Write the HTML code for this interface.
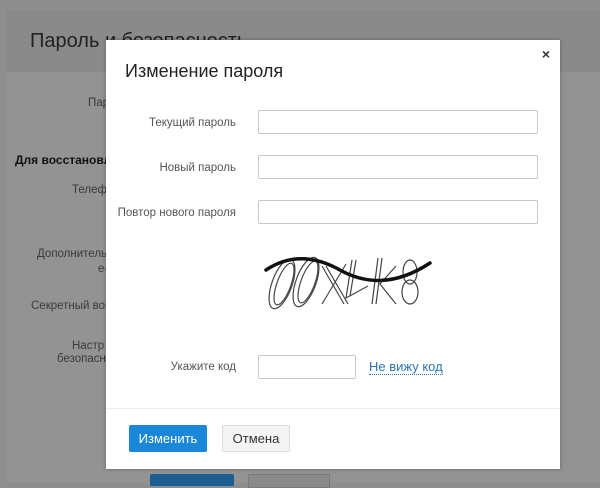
<!DOCTYPE html>
<html><head><meta charset="utf-8"><style>
body{margin:0;width:600px;height:483px;background:#8e8e8e;font-family:"Liberation Sans",sans-serif;position:relative;overflow:hidden}
.a{position:absolute}
.bgp{left:6px;top:10px;width:594px;height:473px;background:#939393}
.hdr{left:6px;top:10px;width:594px;height:62px;background:#8a8a8a}
.bl{color:#3a3a3a;font-size:11.5px;text-align:right}
.m{left:106px;top:40px;width:454px;height:429px;background:#fff;box-shadow:0 0 4px rgba(0,0,0,.3)}
.lab{position:absolute;right:324px;font-size:11.5px;color:#555;text-align:right;white-space:nowrap}
.inp{position:absolute;left:152px;width:278px;height:22px;border:1px solid #c8c8c8;border-radius:2px}
</style></head><body>
<div class="a bgp"></div><div class="a hdr"></div>
<div class="a" style="left:30px;top:30px;font-size:20px;color:#222">Пароль и безопасность</div>
<div class="a bl" style="left:88px;top:97px">Пар</div>
<div class="a" style="left:15px;top:153px;font-size:12px;font-weight:bold;color:#111">Для восстановления</div>
<div class="a bl" style="left:72px;top:184px">Телеф</div>
<div class="a bl" style="left:37px;top:248px">Дополнитель</div>
<div class="a bl" style="left:98px;top:263px">е-</div>
<div class="a bl" style="left:31px;top:300px">Секретный вопрос</div>
<div class="a bl" style="left:72px;top:340px">Настр</div>
<div class="a bl" style="left:57px;top:353px">безопасн</div>
<div class="a" style="left:150px;top:474px;width:84px;height:12px;background:#1e5d8f;border-radius:2px"></div>
<div class="a" style="left:248px;top:474px;width:80px;height:12px;background:#8a8a8a;border:1px solid #7a7a7a"></div>
<div class="a m">
<div class="a" style="right:10px;top:6px;font-size:14px;font-weight:bold;color:#333">×</div>
<div class="a" style="left:19px;top:21px;font-size:18px;color:#222">Изменение пароля</div>
<div class="lab" style="top:77px">Текущий пароль</div><div class="inp" style="top:70px"></div>
<div class="lab" style="top:122px">Новый пароль</div><div class="inp" style="top:115px"></div>
<div class="lab" style="top:167px">Повтор нового пароля</div><div class="inp" style="top:160px"></div>
<svg class="a" style="left:154px;top:202px" width="180" height="80" viewBox="0 0 180 80">
<g fill="none" stroke="#444" stroke-width="1.2"><ellipse cx="22" cy="42" rx="10" ry="26" transform="rotate(20 22 42)"/><ellipse cx="24" cy="42" rx="7" ry="22" transform="rotate(20 24 42)"/><ellipse cx="46" cy="40" rx="10" ry="26" transform="rotate(20 46 40)"/><ellipse cx="48" cy="40" rx="7" ry="22" transform="rotate(20 48 40)"/><path d="M62 24 L84 62 M66 24 L88 62 M86 22 L62 62 M92 18 L86 56 L108 44 M96 18 L90 54 M118 16 L112 62 M122 16 L116 62 M136 24 L120 42 L136 62"/><ellipse cx="150" cy="30" rx="7" ry="12"/><ellipse cx="150" cy="50" rx="8" ry="12"/></g>
<path d="M6 28 C30 12 55 14 80 28 C105 42 135 44 170 21" fill="none" stroke="#111" stroke-width="3.5" stroke-linecap="round"/></svg>
<div class="lab" style="top:321px">Укажите код</div>
<div class="a" style="left:152px;top:315px;width:96px;height:22px;border:1px solid #c8c8c8;border-radius:2px"></div>
<div class="a" style="left:263px;top:319px;font-size:13px;color:#2a75b5;border-bottom:1px dotted #2a75b5;line-height:15px">Не вижу код</div>
<div class="a" style="left:0;top:368px;width:454px;border-top:1px solid #eee"></div>
<div class="a" style="left:23px;top:385px;width:78px;height:27px;background:#1a87d8;border-radius:2px;color:#fff;font-size:13px;line-height:27px;text-align:center">Изменить</div>
<div class="a" style="left:116px;top:385px;width:66px;height:25px;background:#f4f4f4;border:1px solid #ddd;border-radius:2px;color:#333;font-size:13px;line-height:25px;text-align:center">Отмена</div>
</div>
</body></html>
